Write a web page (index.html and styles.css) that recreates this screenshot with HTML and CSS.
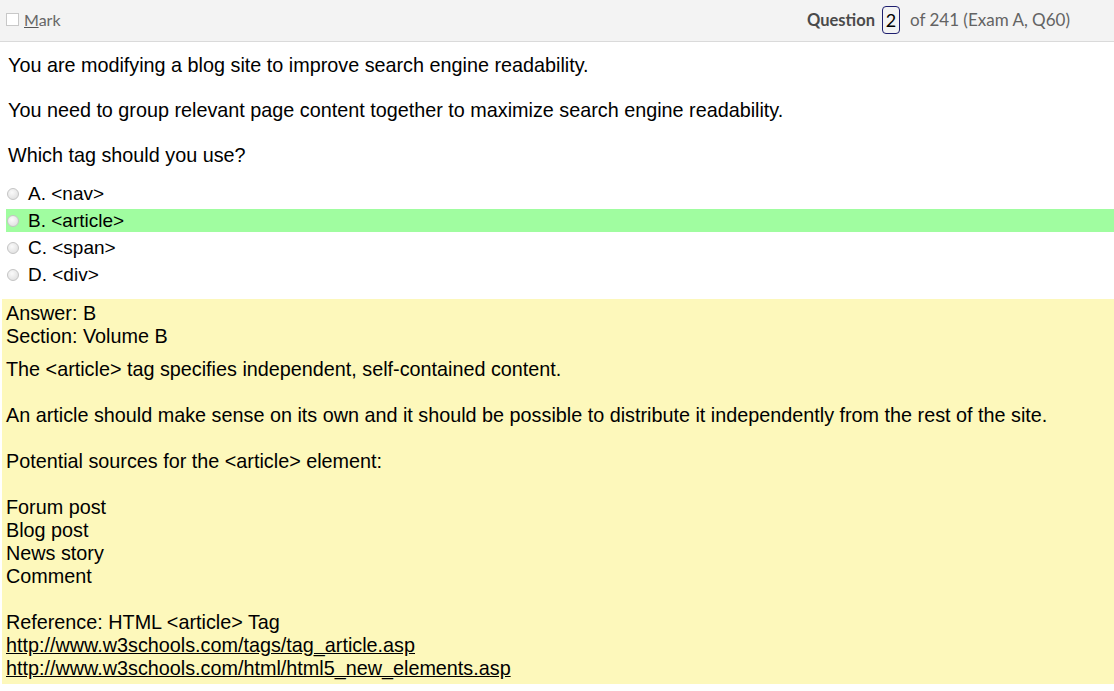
FILE: index.html
```html
<!DOCTYPE html>
<html lang="en">
<head>
<meta charset="utf-8">
<title>Question 2 of 241</title>
<link rel="stylesheet" href="styles.css">
</head>
<body>
<header class="topbar">
  <label class="mark"><span class="checkbox"></span><span class="mark-label"><u>M</u>ark</span></label>
  <div class="qinfo"><b class="qword">Question</b><span class="qnum">2</span><span class="qof">of 241 (Exam A, Q60)</span></div>
</header>
<main class="question">
  <p class="stem">You are modifying a blog site to improve search engine readability.</p>
  <p class="stem">You need to group relevant page content together to maximize search engine readability.</p>
  <p class="stem last">Which tag should you use?</p>
  <ul class="options">
    <li class="option"><span class="radio"></span>A. &lt;nav&gt;</li>
    <li class="option correct"><span class="radio"></span>B. &lt;article&gt;</li>
    <li class="option"><span class="radio"></span>C. &lt;span&gt;</li>
    <li class="option"><span class="radio"></span>D. &lt;div&gt;</li>
  </ul>
</main>
<section class="explanation">
  <div class="line">Answer: B</div>
  <div class="line">Section: Volume B</div>
  <p class="para first">The &lt;article&gt; tag specifies independent, self-contained content.</p>
  <p class="para">An article should make sense on its own and it should be possible to distribute it independently from the rest of the site.</p>
  <p class="para">Potential sources for the &lt;article&gt; element:</p>
  <div class="block">
    <div class="line">Forum post</div>
    <div class="line">Blog post</div>
    <div class="line">News story</div>
    <div class="line">Comment</div>
  </div>
  <div class="block">
    <div class="line">Reference: HTML &lt;article&gt; Tag</div>
    <div class="line"><a class="ref" href="#">http://www.w3schools.com/tags/tag_article.asp</a></div>
    <div class="line"><a class="ref" href="#">http://www.w3schools.com/html/html5_new_elements.asp</a></div>
  </div>
</section>
</body>
</html>
```

FILE: styles.css
```css
html, body {
  margin: 0;
  padding: 0;
  background: #ffffff;
}
body {
  font-family: "Liberation Sans", Arial, sans-serif;
  color: #000;
}
.topbar {
  height: 39px;
  padding-bottom: 2px;
  background: #f3f3f3;
  border-bottom: 1px solid #dadada;
  display: flex;
  align-items: center;
  justify-content: space-between;
  font-family: Lato, "Open Sans", sans-serif;
  font-size: 16.5px;
  color: #636363;
}
.mark {
  display: flex;
  align-items: center;
  padding-left: 6px;
  gap: 5px;
  font-size: 16px;
}
.checkbox {
  width: 11px;
  height: 11px;
  border: 1px solid #c8c8c8;
  background: #fff;
  display: inline-block;
}
.mark-label {
  color: #666;
}
.mark-label u {
  text-decoration-color: #555;
}
.qinfo {
  display: flex;
  align-items: center;
  padding-right: 44px;
}
.qword {
  color: #4a4a4a;
  font-weight: 700;
}
.qnum {
  display: inline-flex;
  align-items: center;
  justify-content: center;
  width: 16px;
  height: 26px;
  border: 1px solid #1e1e6e;
  border-radius: 4px;
  color: #000;
  margin: 0 10px 0 7px;
  font-size: 18px;
}
.qof {
  font-size: 17px;
}
.question {
  padding: 12px 0 13px 0;
}
.stem {
  margin: 0 0 22px 0;
  padding-left: 8px;
  font-size: 19.8px;
  line-height: 23px;
}
.stem.last {
  margin-bottom: 15px;
}
.options {
  list-style: none;
  margin: 0;
  padding: 0 0 0 6px;
  display: flex;
  flex-direction: column;
  gap: 4px;
}
.option {
  display: flex;
  align-items: center;
  height: 23px;
  font-size: 19px;
  gap: 9px;
  padding-left: 1px;
}
.option.correct {
  background: #a0fda0;
}
.radio {
  width: 10px;
  height: 10px;
  border-radius: 50%;
  border: 1px solid #c4c4c4;
  background: radial-gradient(circle at 40% 35%, #fafafa 0%, #e4e4e4 70%, #d6d6d6 100%);
  display: inline-block;
}
.explanation {
  margin-left: 2px;
  background: #fdf8bb;
  padding: 3px 4px 4px 4px;
  font-size: 19.8px;
  line-height: 23px;
}
.para {
  margin: 0;
  padding-top: 23px;
}
.para.first {
  padding-top: 10px;
}
.block {
  padding-top: 23px;
}
.ref {
  color: #000;
  text-decoration: underline;
}
```
